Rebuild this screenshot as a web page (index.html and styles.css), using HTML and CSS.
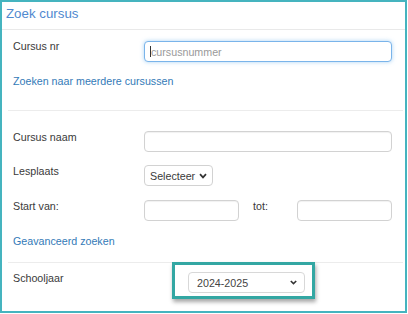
FILE: index.html
```html
<!DOCTYPE html>
<html lang="nl">
<head>
  <meta charset="UTF-8" />
  <meta name="viewport" content="width=device-width, initial-scale=1.0"/>
  <title>Zoek cursus</title>
  <link rel="stylesheet" href="styles.css">
</head>
<body>

<div class="panel">
  <div class="panel-head">Zoek cursus</div>

  <div class="section first">
    <div class="row">
      <label class="lbl">Cursus nr</label>
      <div class="ctl">
        <span class="caret-wrap"><input type="text" class="field focus" placeholder="cursusnummer" /></span>
      </div>
    </div>
    <a class="link" href="#">Zoeken naar meerdere cursussen</a>
  </div>

  <div class="section second">
    <div class="row">
      <label class="lbl">Cursus naam</label>
      <div class="ctl"><input type="text" class="field" /></div>
    </div>
    <div class="row mid">
      <label class="lbl">Lesplaats</label>
      <div class="ctl">
        <div class="pick small">
          <span>Selecteer</span>
          <svg width="8" height="6" viewBox="0 0 8 6"><path d="M1 1.2 L4 4.4 L7 1.2" fill="none" stroke="#333" stroke-width="1.7"/></svg>
        </div>
      </div>
    </div>
    <div class="row">
      <label class="lbl">Start van:</label>
      <div class="ctl range">
        <input type="text" class="field" />
        <span class="tot">tot:</span>
        <input type="text" class="field" />
      </div>
    </div>
    <a class="link" href="#">Geavanceerd zoeken</a>
  </div>

  <div class="section third">
    <div class="row">
      <label class="lbl">Schooljaar</label>
      <div class="ctl">
        <div class="highlight">
          <div class="pick wide">
            <span>2024-2025</span>
            <svg width="7" height="5" viewBox="0 0 7 5"><path d="M0.8 1 L3.5 3.6 L6.2 1" fill="none" stroke="#333" stroke-width="1.6"/></svg>
          </div>
        </div>
      </div>
    </div>
  </div>
</div>

</body>
</html>
```

FILE: styles.css
```css
body {
  margin: 0;
  font-family: "Liberation Sans", Arial, sans-serif;
  font-size: 10.7px;
  color: #3a3a3a;
  background: #fff;
}

.panel {
  box-sizing: border-box;
  width: 407px;
  height: 313px;
  border: 2px solid #45b4bf;
}

.panel-head {
  padding: 4px 4px 7px;
  line-height: 16px;
  font-size: 13.3px;
  color: #5089cf;
  border-bottom: 1px solid #e9e9e9;
}

.section {
  margin: 0 2px 0 6px;
  padding: 0 11px 0 5px;
  border-bottom: 1px solid #ececec;
}

.section.first {
  padding-top: 11px;
  padding-bottom: 21px;
}

.section.second {
  padding-top: 20px;
  padding-bottom: 13px;
}

.section.third {
  border-bottom: none;
}

.row {
  display: flex;
  align-items: flex-start;
  margin-bottom: 13px;
}

.row.mid {
  margin-bottom: 14px;
}

.lbl {
  width: 131px;
  flex: none;
  line-height: 15px;
  margin-top: -1px;
}

.first .lbl {
  margin-top: -2px;
}

.ctl {
  flex: 1;
}

.field {
  display: block;
  box-sizing: border-box;
  width: 100%;
  height: 21px;
  margin: 0;
  padding: 0 6px;
  font: inherit;
  color: #555;
  border: 1px solid #d2d2d2;
  border-radius: 4px;
  box-shadow: inset 0 1px 1px rgba(0, 0, 0, 0.06);
  outline: none;
}

.field::placeholder {
  color: #9a9a9a;
}

.field.focus {
  border-color: #7ab4ea;
  box-shadow: 0 0 4px rgba(102, 175, 233, 0.55);
}

.caret-wrap {
  display: block;
  position: relative;
}

.caret-wrap::before {
  content: "";
  position: absolute;
  left: 6px;
  top: 5px;
  width: 1px;
  height: 11px;
  background: #333;
}

.range {
  display: grid;
  grid-template-columns: 95px 1fr 95px;
  align-items: start;
}

.tot {
  padding-left: 14px;
  line-height: 15px;
  margin-top: -1px;
}

.link {
  display: block;
  line-height: 15px;
  color: #337ab7;
  text-decoration: none;
}

.first .link {
  margin-top: -1px;
}

.pick {
  box-sizing: border-box;
  display: flex;
  align-items: center;
  justify-content: space-between;
  height: 21px;
  border: 1px solid #d2d2d2;
  border-radius: 4px;
  background: #fff;
}

.pick.small {
  width: 69px;
  padding: 0 5px;
}

.pick.small svg {
  margin-top: 1px;
}

.pick.wide {
  width: 117px;
  padding: 0 7px 0 8px;
  color: #444;
  border-color: #d8d8d8;
}

.third .row {
  margin-bottom: 0;
}

.third .lbl {
  margin-top: 8px;
}

.highlight {
  box-sizing: border-box;
  width: 143px;
  margin: -1px 0 0 28px;
  padding: 7px 7px 3px 13px;
  border: 3px solid #33a7a3;
  box-shadow: 1px 3px 4px rgba(0, 0, 0, 0.35);
  background: #fff;
}
```
